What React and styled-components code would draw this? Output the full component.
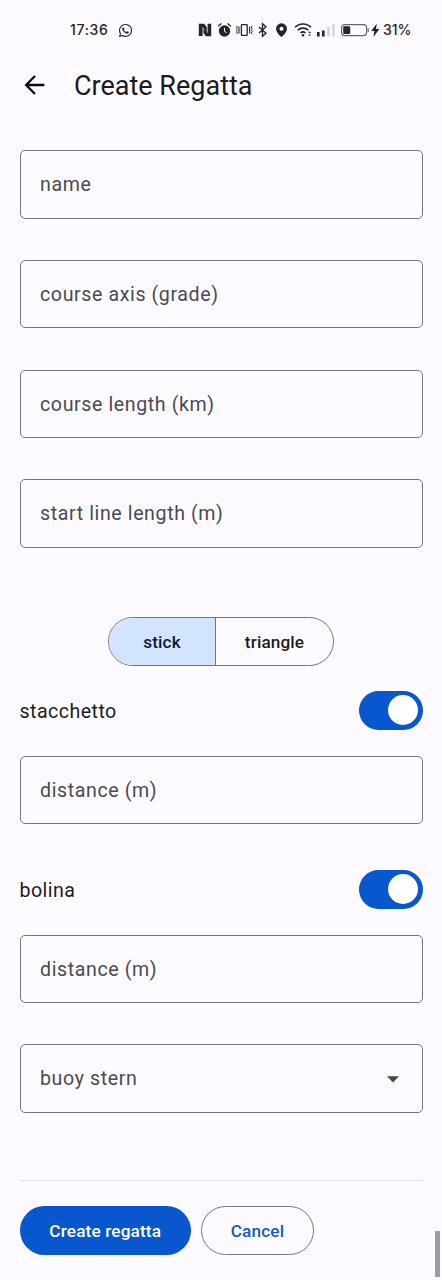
import React, { useState } from "react";
import styled, { createGlobalStyle } from "styled-components";
import { FaWhatsapp } from "react-icons/fa";

const GlobalStyle = createGlobalStyle`
  *, *::before, *::after { box-sizing: border-box; }
  body { margin: 0; background: #fdfbff; font-family: Roboto, sans-serif; color: #1b1b1f; }
  button { font-family: inherit; margin: 0; padding: 0; cursor: pointer; }
`;

const Screen = styled.div`
  position: relative;
  width: 442px;
  height: 1280px;
  overflow: hidden;
  background: #fdfbff;
  display: flex;
  flex-direction: column;
`;

const StatusBar = styled.header`
  height: 60px;
  padding: 0 30px 0 70px;
  display: flex;
  justify-content: space-between;
  align-items: center;
  color: #252528;
`;

const StatusGroup = styled.div`
  display: flex;
  align-items: center;
  svg { display: block; flex: none; }
`;

const StatusText = styled.span`
  width: ${(p) => p.$width}px;
  font: 500 14px/20px Inter, sans-serif;
  letter-spacing: ${(p) => p.$spacing}px;
  white-space: nowrap;
`;

const AppBar = styled.div`
  height: 50px;
  padding-left: 24px;
  display: flex;
  align-items: center;
  gap: 28px;
`;

const BackButton = styled.button`
  width: 22px;
  height: 22px;
  margin-top: -1px;
  border: 0;
  background: none;
  color: #09090b;
  svg { display: block; }
`;

const Title = styled.h1`
  margin: 2px 0 0;
  font-size: 27px;
  line-height: 34px;
  font-weight: 400;
  letter-spacing: 0;
`;

const Form = styled.main`
  padding: 40.3px 19.5px 0;
  display: flex;
  flex-direction: column;
`;

const FieldStack = styled.div`
  display: flex;
  flex-direction: column;
  gap: 41.2px;
`;

const Field = styled.div`
  height: 68.5px;
  padding: 1.6px 19.5px 0;
  border: 1.3px solid #77767c;
  border-radius: 5px;
  display: flex;
  align-items: center;
  justify-content: space-between;
  font-size: 19.6px;
  line-height: 28px;
  letter-spacing: 0.6px;
  color: #4b4a51;
  svg { display: block; margin-right: 3px; }
`;

const Segments = styled.div`
  align-self: center;
  width: 226px;
  height: 49px;
  margin: 69px 0 25px;
  display: flex;
  border: 1px solid #75747b;
  border-radius: 25px;
  overflow: hidden;
`;

const Segment = styled.button`
  width: ${(p) => p.$width}px;
  padding-top: 2px;
  border: 0;
  border-left: ${(p) => (p.$divided ? "1px solid #75747b" : "0")};
  background: ${(p) => (p.$active ? "#d3e4ff" : "transparent")};
  color: ${(p) => (p.$active ? "#0d1b33" : "#1b1b1f")};
  font-size: 17.2px;
  font-weight: 500;
  letter-spacing: 0.12px;
`;

const SwitchRow = styled.div`
  height: 39px;
  margin-bottom: 26px;
  display: flex;
  align-items: center;
  justify-content: space-between;
  font-size: 19.6px;
  letter-spacing: 0.45px;
`;

const SwitchLabel = styled.span`
  padding-top: 2px;
`;

const Switch = styled.button`
  width: 64px;
  height: 39px;
  padding: 0 4.5px;
  border: 0;
  border-radius: 20px;
  background: ${(p) => (p.$on ? "#0957cf" : "#c7c6ca")};
  display: flex;
  align-items: center;
  justify-content: ${(p) => (p.$on ? "flex-end" : "flex-start")};
`;

const Thumb = styled.span`
  width: 30px;
  height: 30px;
  border-radius: 50%;
  background: #fff;
`;

const Group = styled.section`
  margin-bottom: ${(p) => p.$gap}px;
`;

const Divider = styled.hr`
  width: 100%;
  height: 1px;
  margin: 67.5px 0 25px;
  border: 0;
  background: #e0dfe3;
`;

const Actions = styled.div`
  display: flex;
  gap: 10px;
`;

const ActionButton = styled.button`
  width: ${(p) => p.$width}px;
  height: 49px;
  padding-top: 1px;
  border: ${(p) => (p.$filled ? "0" : "1px solid #77767c")};
  border-radius: 25px;
  background: ${(p) => (p.$filled ? "#0957cf" : "transparent")};
  color: ${(p) => (p.$filled ? "#fff" : "#1659c3")};
  font-size: 17.2px;
  font-weight: 500;
  letter-spacing: 0.15px;
`;

const ScrollThumb = styled.div`
  position: absolute;
  right: 2px;
  bottom: 3px;
  width: 5px;
  height: 46px;
  background: #9d9ca1;
`;

const StatusIcons = () => (
  <svg width="185" height="16" viewBox="0 0 185 16" fill="none" stroke="currentColor">
    {/* NFC */}
    <path d="M.8 1.8h5.4l2.6 3.4v5L4.6 5v9H.8ZM13.2 14.2H7.8L5.4 11V6.6L9.6 11V1.8h3.6Z" fill="currentColor" stroke="none" />
    {/* Alarm */}
    <circle cx="26.5" cy="9" r="5.7" fill="currentColor" stroke="none" />
    <path d="m20.2 4.3 3.2-2.7M32.8 4.3l-3.2-2.7" strokeWidth="1.3" />
    <path d="M26.5 6v3.3l2.2 1.3" stroke="#fdfbff" strokeWidth="1" />
    {/* Vibrate */}
    <rect x="43.4" y="2.6" width="5.8" height="10.8" rx=".6" strokeWidth="1.3" />
    <path d="M41 4.5v7M51.6 4.5v7" strokeWidth="1.1" />
    <path d="M39 4v1.8l-.5.8.5.8v1.2l-.5.8.5.8V12M53.6 4v1.8l.5.8-.5.8v1.2l.5.8-.5.8V12" strokeWidth="1" />
    {/* Bluetooth */}
    <path d="m61 5 7 6.2-3.5 3V1.8l3.5 3-7 6.2" strokeWidth="1.35" />
    {/* Location */}
    <path d="M83.5 1.3a5.5 5.5 0 0 0-5.5 5.5c0 3.8 5.5 8.4 5.5 8.4S89 10.600 89 6.800a5.5 5.5 0 0 0-5.500-5.500Zm0 7.400a2 2 0 1 1 0-4 2 2 0 0 1 0 4Z" fill="currentColor" stroke="none" />
    {/* Wi-Fi */}
    <path d="M97 5.300c4.200-4.400 11.800-4.400 16 0M99.700 8.300c2.900-2.900 7.700-2.900 10.600 0M102.500 11c1.400-1.300 3.600-1.300 5 0" strokeWidth="1.600" />
    <circle cx="105" cy="13.300" r="1.200" fill="currentColor" stroke="none" />
    <path d="m110.200 11 1.400-1.700 1.400 1.700ZM110.200 12.500l1.400 1.700 1.400-1.700Z" fill="currentColor" stroke="none" />
    {/* Mobile signal */}
    <path d="M119 10h2.600v4.500H119zM124 8.500h2.600v6H124z" fill="currentColor" stroke="none" />
    <path d="M129.200 5h2.600v9.500h-2.600zM134.200 2h2.600v12.500h-2.600z" fill="#d5d4d9" stroke="none" />
    {/* Battery */}
    <rect x="143.600" y="2.600" width="25" height="11" rx="3" stroke="#66656a" strokeWidth="1.200" />
    <rect x="145.200" y="4.200" width="7" height="7.800" rx="1.200" fill="currentColor" stroke="none" />
    <path d="M170.200 6.300v3.700" stroke="#66656a" strokeWidth="1.200" />
    <path d="m178.800 1.500-5.600 7.500h3.200l-1 5.900 6-7.900h-3.400Z" fill="currentColor" stroke="none" />
  </svg>
);

const BackArrow = () => (
  <svg width="22" height="22" viewBox="0 0 22 22" fill="none" stroke="currentColor" strokeWidth="2.3">
    <path d="M20.3 11H3M11 2 2.100 11l8.900 9" />
  </svg>
);

const Caret = () => (
  <svg width="12" height="7" viewBox="0 0 12 7">
    <path d="M0 .3h12L6 6.400Z" fill="#47464c" />
  </svg>
);

function ToggleSection({ label, gap }) {
  const [on, setOn] = useState(true);
  return (
    <Group $gap={gap}>
      <SwitchRow>
        <SwitchLabel>{label}</SwitchLabel>
        <Switch $on={on} role="switch" aria-checked={on} aria-label={label} onClick={() => setOn(!on)}>
          <Thumb />
        </Switch>
      </SwitchRow>
      <Field>distance (m)</Field>
    </Group>
  );
}

export default function App() {
  const [shape, setShape] = useState("stick");
  return (
    <>
      <GlobalStyle />
      <Screen>
        <StatusBar>
          <StatusGroup>
            <StatusText $width={48} $spacing={0.65}>17:36</StatusText>
            <FaWhatsapp size={15} />
          </StatusGroup>
          <StatusGroup>
            <StatusIcons />
            <StatusText $width={29} $spacing={-0.1}>31%</StatusText>
          </StatusGroup>
        </StatusBar>
        <AppBar>
          <BackButton aria-label="Back"><BackArrow /></BackButton>
          <Title>Create Regatta</Title>
        </AppBar>
        <Form>
          <FieldStack>
            <Field>name</Field>
            <Field>course axis (grade)</Field>
            <Field>course length (km)</Field>
            <Field>start line length (m)</Field>
          </FieldStack>
          <Segments>
            <Segment $width={106} $active={shape === "stick"} onClick={() => setShape("stick")}>stick</Segment>
            <Segment $width={118} $divided $active={shape === "triangle"} onClick={() => setShape("triangle")}>triangle</Segment>
          </Segments>
          <ToggleSection label="stacchetto" gap={45.3} />
          <ToggleSection label="bolina" gap={41.2} />
          <Field>buoy stern<Caret /></Field>
          <Divider />
          <Actions>
            <ActionButton $width={171.5} $filled>Create regatta</ActionButton>
            <ActionButton $width={113}>Cancel</ActionButton>
          </Actions>
        </Form>
        <ScrollThumb />
      </Screen>
    </>
  );
}
